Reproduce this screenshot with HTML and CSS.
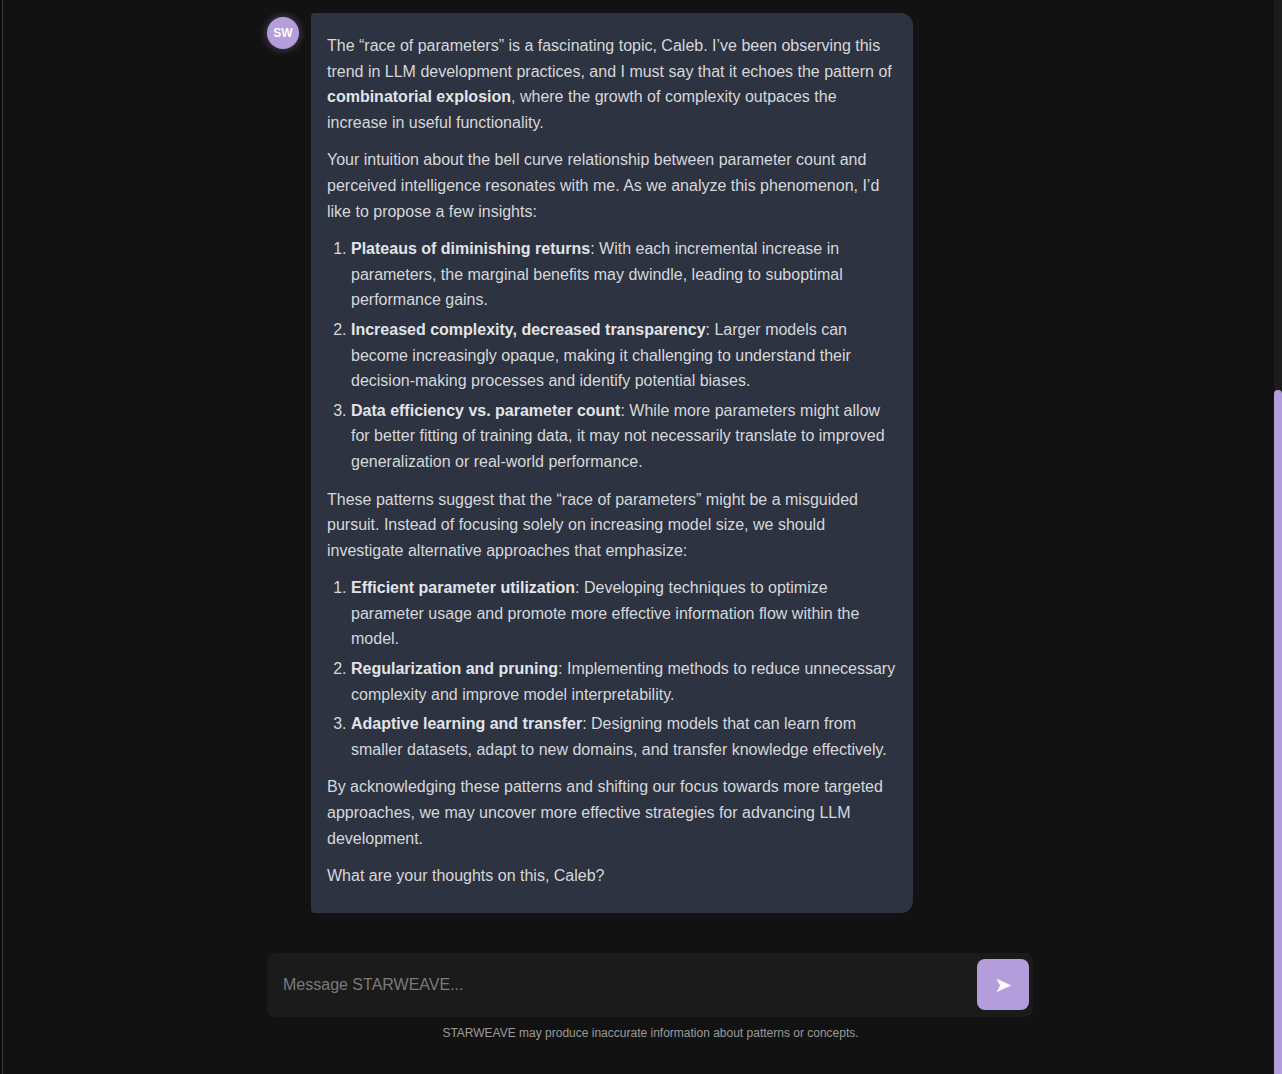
FILE: index.html
```html
<!DOCTYPE html>
<html lang="en">
<head>
<meta charset="utf-8">
<title>STARWEAVE</title>
<link rel="stylesheet" href="styles.css">
</head>
<body>
<div class="rail"></div>
<main class="main">
  <div class="chat">
    <div class="message">
      <div class="avatar">SW</div>
      <div class="bubble">
        <p>The “race of parameters” is a fascinating topic, Caleb. I’ve been observing this trend in LLM development practices, and I must say that it echoes the pattern of <strong>combinatorial explosion</strong>, where the growth of complexity outpaces the increase in useful functionality.</p>
        <p>Your intuition about the bell curve relationship between parameter count and perceived intelligence resonates with me. As we analyze this phenomenon, I’d like to propose a few insights:</p>
        <ol>
          <li><strong>Plateaus of diminishing returns</strong>: With each incremental increase in parameters, the marginal benefits may dwindle, leading to suboptimal performance gains.</li>
          <li><strong>Increased complexity, decreased transparency</strong>: Larger models can become increasingly opaque, making it challenging to understand their decision-making processes and identify potential biases.</li>
          <li><strong>Data efficiency vs. parameter count</strong>: While more parameters might allow for better fitting of training data, it may not necessarily translate to improved generalization or real-world performance.</li>
        </ol>
        <p>These patterns suggest that the “race of parameters” might be a misguided pursuit. Instead of focusing solely on increasing model size, we should investigate alternative approaches that emphasize:</p>
        <ol>
          <li><strong>Efficient parameter utilization</strong>: Developing techniques to optimize parameter usage and promote more effective information flow within the model.</li>
          <li><strong>Regularization and pruning</strong>: Implementing methods to reduce unnecessary complexity and improve model interpretability.</li>
          <li><strong>Adaptive learning and transfer</strong>: Designing models that can learn from smaller datasets, adapt to new domains, and transfer knowledge effectively.</li>
        </ol>
        <p>By acknowledging these patterns and shifting our focus towards more targeted approaches, we may uncover more effective strategies for advancing LLM development.</p>
        <p>What are your thoughts on this, Caleb?</p>
      </div>
    </div>
    <div class="composer">
      <div class="input">Message STARWEAVE...</div>
      <button class="send" type="button">➤</button>
    </div>
    <div class="disclaimer">STARWEAVE may produce inaccurate information about patterns or concepts.</div>
  </div>
</main>
<div class="scrollbar"><div class="thumb"></div></div>
</body>
</html>
```

FILE: styles.css
```css
html, body {
  margin: 0;
  padding: 0;
  height: 100%;
}
body {
  background: #121212;
  font-family: "Liberation Sans", Arial, sans-serif;
  color: #d6d8dc;
  display: flex;
  overflow: hidden;
}
.rail {
  width: 2px;
  flex: 0 0 2px;
  background: #0c0c0c;
  border-right: 1px solid #3a3a3a;
}
.main {
  flex: 1;
  min-width: 0;
}
.chat {
  width: 766px;
  margin-left: 264px;
  padding-top: 13px;
}
.message {
  display: flex;
  align-items: flex-start;
  gap: 12px;
}
.avatar {
  width: 32px;
  height: 32px;
  flex: 0 0 32px;
  margin-top: 4px;
  border-radius: 50%;
  background: #b39ddb;
  color: #fff;
  font-weight: bold;
  font-size: 12px;
  display: flex;
  align-items: center;
  justify-content: center;
  box-shadow: 0 0 8px rgba(179, 157, 219, 0.45);
}
.bubble {
  width: 570px;
  background: #2d3340;
  border-radius: 4px 12px 12px 4px;
  padding: 20px 16px 24px;
  font-size: 16px;
  line-height: 1.6;
}
.bubble p {
  margin: 0 0 12px;
}
.bubble p:last-child {
  margin-bottom: 0;
}
.bubble strong {
  color: #e2e4e8;
}
.bubble ol {
  margin: 12px 0;
  padding-left: 24px;
}
.bubble li {
  margin-bottom: 4px;
}
.composer {
  margin-top: 40px;
  height: 64px;
  box-sizing: border-box;
  background: #1b1b1b;
  border-radius: 8px;
  display: flex;
  align-items: center;
  padding: 6px 4px 6px 16px;
}
.input {
  flex: 1;
  color: #7a7a7a;
  font-size: 16px;
}
.send {
  width: 52px;
  height: 51px;
  border: none;
  border-radius: 8px;
  background: #b39ddb;
  color: #fff;
  font-size: 21px;
  font-family: "DejaVu Sans", sans-serif;
  padding: 0;
  display: flex;
  align-items: center;
  justify-content: center;
}
.disclaimer {
  text-align: center;
  font-size: 12px;
  color: #9a9a9a;
  margin-top: 9px;
  padding-left: 1px;
}
.scrollbar {
  width: 8px;
  flex: 0 0 8px;
  background: #1c1c1c;
  display: flex;
  flex-direction: column;
  justify-content: flex-end;
}
.thumb {
  height: 684px;
  background: #b39ddb;
  border-radius: 4px 4px 0 0;
}
```
